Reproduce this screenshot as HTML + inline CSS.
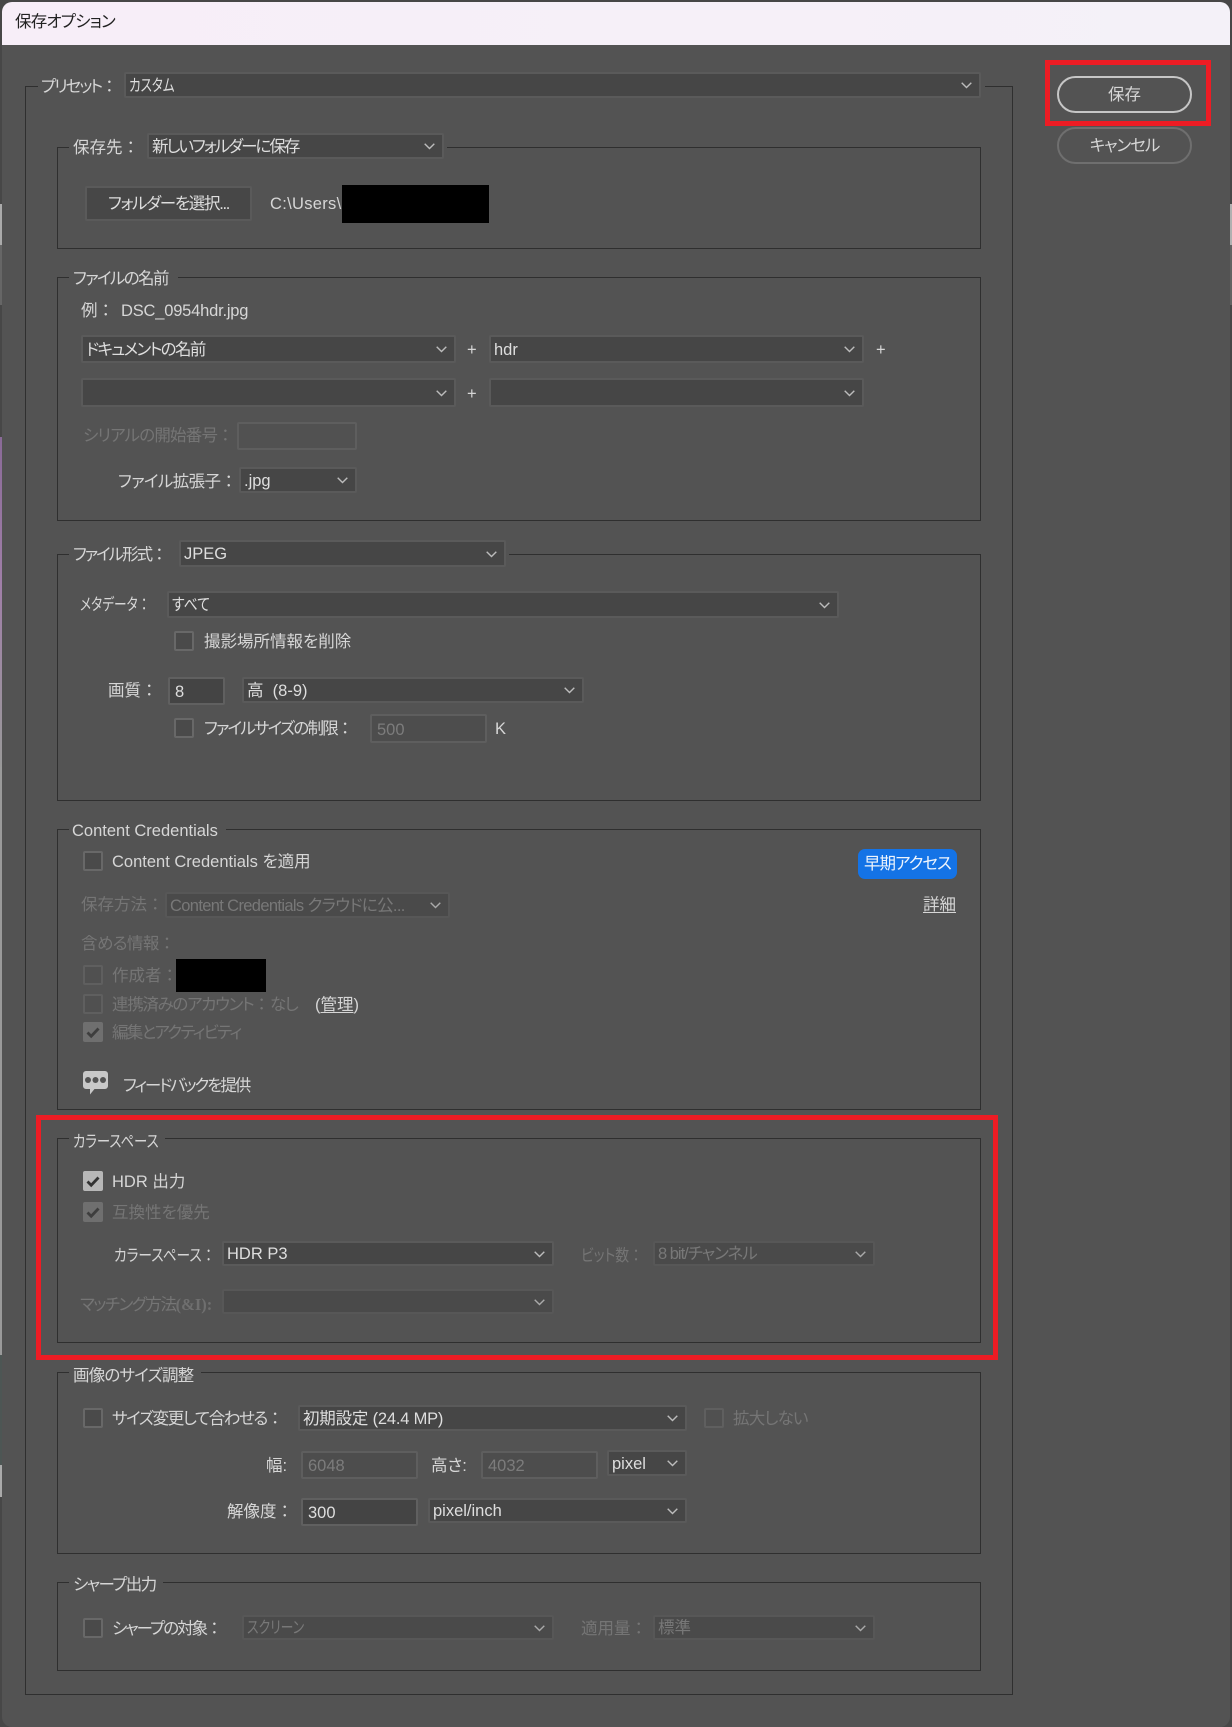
<!DOCTYPE html>
<html lang="ja"><head><meta charset="utf-8"><title>保存オプション</title>
<style>
html,body{margin:0;padding:0;background:#474747;width:1232px;height:1727px;overflow:hidden}
body{position:relative;font-family:"Liberation Sans","Noto Sans CJK JP",sans-serif;font-size:16.5px;color:#d6d6d6;font-feature-settings:"palt"}
div,span,svg{position:absolute;box-sizing:border-box}
i{font-style:normal;font-feature-settings:normal;position:static;letter-spacing:0}
#win{left:2px;top:2px;width:1228px;height:1725px;background:#535353;border-radius:10px;overflow:hidden}
#title{left:0;top:0;width:1228px;height:43px;background:linear-gradient(90deg,#f7eef8,#f6f0f8 60%,#f4f1f8);color:#222;line-height:40px;padding-left:13px;letter-spacing:-.8px}
#root{left:0;top:0;width:1232px;height:1727px}
.g{border:1px solid #2f2f2f}
.m{background:#535353;height:6px}
.t{height:25px;padding-top:1px;line-height:24px;white-space:nowrap;transform-origin:0 50%}
.d{color:#757575}
.s,.n{background:#464646;border:2px solid #5a5a5a;border-radius:2px;white-space:nowrap;overflow:hidden;padding-left:3px;padding-top:1px;color:#dedede}
.s.x{background:#4a4a4a;border-color:#575757;color:#787878}
.n{padding-left:5px;background:#444;border-color:#606060}
.n.x{background:#4d4d4d;border-color:#5e5e5e;color:#7c7c7c}
.k{position:static;display:inline-block;transform-origin:0 50%}
.c{right:7px;top:50%;margin-top:-3px;width:11px;height:7px;fill:none;stroke:#bcbcbc;stroke-width:1.4}
.x .c{stroke:#aaa}
.b{width:20px;height:20px;background:#4a4a4a;border:2px solid #686868;border-radius:2px}
.b.x{background:#505050;border-color:#5f5f5f}
.b svg{left:-2px;top:-2px;width:20px;height:20px;fill:none;stroke:#333;stroke-width:2.8}
.b.on{background:#b7b7b7;border-color:#b7b7b7}
.b.ox{background:#6f6f6f;border-color:#6f6f6f}
.b.ox svg{stroke:#3e3e3e}
.p{left:1057px;width:135px;height:37px;border:2px solid #c6c6c6;border-radius:19px;text-align:center;line-height:35px}
.r{border:5px solid #ed1c24}
u{position:static;text-underline-offset:2px}
</style></head><body>
<div style="left:0;top:204px;width:2px;height:41px;background:#aaa"></div>
<div style="left:0;top:245px;width:2px;height:60px;background:#666"></div>
<div style="left:0;top:437px;width:2px;height:330px;background:linear-gradient(#8a6a98,#a07fa8 45%,#999)"></div>
<div style="left:0;top:767px;width:2px;height:588px;background:#9a9a9a"></div>
<div style="left:0;top:1355px;width:2px;height:110px;background:#4d5654"></div>
<div style="left:0;top:1465px;width:2px;height:32px;background:#aaa"></div>
<div style="left:1230px;top:204px;width:2px;height:41px;background:#b0b0b0"></div>
<div style="left:1230px;top:245px;width:2px;height:60px;background:#626262"></div>
<div id="win"><div id="title">保存オプション</div></div>
<div id="root">

<!-- outer frame -->
<div class="g" style="left:25px;top:86px;width:988px;height:1609px"></div>
<div class="m" style="left:38px;top:83px;width:947px"></div>
<div class="t" style="left:41px;top:74px;letter-spacing:-2px">プリセット<i>：</i></div>
<div class="s" style="left:124px;top:72px;width:857px;height:26px;line-height:22px"><span class="k" style="transform:scaleX(.76)">カスタム</span><svg class="c" viewBox="0 0 11 7"><path d="M.7.7l4.800 4.800L10.300.7"/></svg></div>

<div class="p" style="top:76px">保存</div>
<div class="p" style="top:127px;border-color:#6f6f6f;letter-spacing:-1px">キャンセル</div>
<div class="r" style="left:1045px;top:60px;width:166px;height:66px"></div>

<!-- 保存先 -->
<div class="g" style="left:57px;top:147px;width:924px;height:102px"></div>
<div class="m" style="left:69px;top:144px;width:378px"></div>
<div class="t" style="left:73px;top:135px">保存先<i>：</i></div>
<div class="s" style="left:147px;top:133px;width:297px;height:26px;line-height:22px;letter-spacing:-2px">新しいフォルダーに保存<svg class="c" viewBox="0 0 11 7"><path d="M.7.7l4.800 4.800L10.300.7"/></svg></div>
<div class="s" style="left:85px;top:186px;width:167px;height:35px;line-height:31px;text-align:center;padding:0;padding-top:1px;background:#474747;letter-spacing:-1.3px">フォルダーを選択...</div>
<div class="t" style="left:270px;top:191px;letter-spacing:.3px">C:\Users\</div>
<div style="left:342px;top:185px;width:147px;height:38px;background:#000"></div>

<!-- ファイルの名前 -->
<div class="g" style="left:57px;top:277px;width:924px;height:244px"></div>
<div class="m" style="left:69px;top:274px;width:109px"></div>
<div class="t" style="left:73px;top:266px;letter-spacing:-1.6px">ファイルの名前</div>
<div class="t" style="left:81px;top:298px">例<i>：</i></div>
<div class="t" style="left:121px;top:298px;letter-spacing:-.2px">DSC_0954hdr.jpg</div>
<div class="s" style="left:81px;top:335px;width:375px;height:28px;line-height:24px;letter-spacing:-1.6px">ドキュメントの名前<svg class="c" viewBox="0 0 11 7"><path d="M.7.7l4.800 4.800L10.300.7"/></svg></div>
<div class="t" style="left:467px;top:337px">+</div>
<div class="s" style="left:489px;top:335px;width:375px;height:28px;line-height:24px">hdr<svg class="c" viewBox="0 0 11 7"><path d="M.7.7l4.800 4.800L10.300.7"/></svg></div>
<div class="t" style="left:876px;top:337px">+</div>
<div class="s" style="left:81px;top:378px;width:375px;height:29px"><svg class="c" viewBox="0 0 11 7"><path d="M.7.7l4.800 4.800L10.300.7"/></svg></div>
<div class="t" style="left:467px;top:381px">+</div>
<div class="s" style="left:489px;top:378px;width:375px;height:29px"><svg class="c" viewBox="0 0 11 7"><path d="M.7.7l4.800 4.800L10.300.7"/></svg></div>
<div class="t d" style="left:83px;top:423px;letter-spacing:-.8px">シリアルの開始番号<i>：</i></div>
<div class="n x" style="left:237px;top:422px;width:120px;height:28px;background:#515151"></div>
<div class="t" style="left:118px;top:469px;letter-spacing:-.6px">ファイル拡張子<i>：</i></div>
<div class="s" style="left:239px;top:467px;width:118px;height:26px;line-height:22px">.jpg<svg class="c" viewBox="0 0 11 7"><path d="M.7.7l4.800 4.800L10.300.7"/></svg></div>

<!-- ファイル形式 -->
<div class="g" style="left:57px;top:554px;width:924px;height:247px"></div>
<div class="m" style="left:69px;top:551px;width:440px"></div>
<div class="t" style="left:73px;top:542px;letter-spacing:-2px">ファイル形式<i>：</i></div>
<div class="s" style="left:179px;top:540px;width:327px;height:27px;line-height:23px">JPEG<svg class="c" viewBox="0 0 11 7"><path d="M.7.7l4.800 4.800L10.300.7"/></svg></div>
<div class="t" style="left:80px;top:592px;transform:scaleX(.77)">メタデータ<i>：</i></div>
<div class="s" style="left:167px;top:591px;width:672px;height:27px;line-height:23px"><span class="k" style="transform:scaleX(.84)">すべて</span><svg class="c" viewBox="0 0 11 7"><path d="M.7.7l4.800 4.800L10.300.7"/></svg></div>
<div class="b" style="left:174px;top:631px"></div>
<div class="t" style="left:204px;top:629px">撮影場所情報を削除</div>
<div class="t" style="left:108px;top:678px">画質<i>：</i></div>
<div class="n" style="left:168px;top:677px;width:57px;height:28px;line-height:25px">8</div>
<div class="s" style="left:242px;top:677px;width:342px;height:26px;line-height:22px">高&nbsp;&nbsp;(8-9)<svg class="c" viewBox="0 0 11 7"><path d="M.7.7l4.800 4.800L10.300.7"/></svg></div>
<div class="b" style="left:174px;top:718px"></div>
<div class="t" style="left:204px;top:716px;letter-spacing:-1.8px">ファイルサイズの制限<i>：</i></div>
<div class="n x" style="left:370px;top:714px;width:117px;height:29px;line-height:26px">500</div>
<div class="t" style="left:495px;top:716px">K</div>

<!-- Content Credentials -->
<div class="g" style="left:57px;top:829px;width:924px;height:281px"></div>
<div class="m" style="left:69px;top:826px;width:157px"></div>
<div class="t" style="left:72px;top:818px">Content Credentials</div>
<div class="b" style="left:83px;top:851px"></div>
<div class="t" style="left:112px;top:849px">Content Credentials を適用</div>
<div style="left:858px;top:849px;width:99px;height:30px;background:#1473e6;border-radius:7px;text-align:center;line-height:31px;color:#eef4fc;white-space:nowrap;letter-spacing:-1px">早期アクセス</div>
<div class="t" style="left:923px;top:892px"><u>詳細</u></div>
<div class="t d" style="left:81px;top:892px">保存方法<i>：</i></div>
<div class="s x" style="left:165px;top:892px;width:285px;height:26px;line-height:22px;padding-left:3px;letter-spacing:-.65px">Content Credentials クラウドに公...<svg class="c" viewBox="0 0 11 7"><path d="M.7.7l4.800 4.800L10.300.7"/></svg></div>
<div class="t d" style="left:81px;top:931px;letter-spacing:-.6px">含める情報<i>：</i></div>
<div class="b x" style="left:83px;top:965px"></div>
<div class="t d" style="left:112px;top:963px">作成者<i>：</i></div>
<div style="left:176px;top:959px;width:90px;height:33px;background:#000"></div>
<div class="b x" style="left:83px;top:994px"></div>
<div class="t d" style="left:112px;top:992px;letter-spacing:-1.300px">連携済みのアカウント<i>：</i>なし</div>
<div class="t" style="left:315px;top:992px">(<u>管理</u>)</div>
<div class="b ox" style="left:83px;top:1022px"><svg viewBox="0 0 20 20"><path d="M4.500 10.500l3.700 3.700L15.500 6.500"/></svg></div>
<div class="t d" style="left:112px;top:1020px;letter-spacing:-1.700px">編集とアクティビティ</div>
<svg style="left:83px;top:1071px" width="25" height="24" viewBox="0 0 25 24"><path fill="#c8c8c8" d="M3 0h19a3 3 0 0 1 3 3v12a3 3 0 0 1-3 3H11.500L7 23.500V18H3a3 3 0 0 1-3-3V3a3 3 0 0 1 3-3z"/><circle cx="5" cy="9" r="3" fill="#535353"/><circle cx="12.500" cy="9" r="3" fill="#535353"/><circle cx="20" cy="9" r="3" fill="#535353"/></svg>
<div class="t" style="left:123px;top:1073px;letter-spacing:-2.100px">フィードバックを提供</div>

<!-- カラースペース -->
<div class="g" style="left:57px;top:1138px;width:924px;height:205px"></div>
<div class="m" style="left:69px;top:1135px;width:96px"></div>
<div class="t" style="left:73px;top:1129px;transform:scaleX(.81)">カラースペース</div>
<div class="b on" style="left:83px;top:1171px"><svg viewBox="0 0 20 20"><path d="M4.500 10.500l3.700 3.700L15.500 6.500"/></svg></div>
<div class="t" style="left:112px;top:1169px">HDR 出力</div>
<div class="b ox" style="left:83px;top:1202px"><svg viewBox="0 0 20 20"><path d="M4.500 10.500l3.700 3.700L15.500 6.500"/></svg></div>
<div class="t d" style="left:112px;top:1200px">互換性を優先</div>
<div class="t" style="left:114px;top:1243px;transform:scaleX(.83)">カラースペース<i>：</i></div>
<div class="s" style="left:222px;top:1241px;width:332px;height:25px;line-height:21px">HDR P3<svg class="c" viewBox="0 0 11 7"><path d="M.7.7l4.800 4.800L10.300.7"/></svg></div>
<div class="t d" style="left:581px;top:1243px;transform:scaleX(.84)">ビット数<i>：</i></div>
<div class="s x" style="left:653px;top:1241px;width:222px;height:25px;line-height:21px;letter-spacing:-1px">8 bit/チャンネル<svg class="c" viewBox="0 0 11 7"><path d="M.7.7l4.800 4.800L10.300.7"/></svg></div>
<div class="t d" style="left:80px;top:1292px;letter-spacing:-1.400px">マッチング方法<i style="font-family:'Liberation Serif',serif;font-weight:bold;color:#6f6f6f">(&amp;I):</i></div>
<div class="s x" style="left:222px;top:1289px;width:332px;height:25px"><svg class="c" viewBox="0 0 11 7"><path d="M.7.7l4.800 4.800L10.300.7"/></svg></div>

<div class="r" style="left:36px;top:1115px;width:962px;height:245px"></div>

<!-- 画像のサイズ調整 -->
<div class="g" style="left:57px;top:1372px;width:924px;height:182px"></div>
<div class="m" style="left:69px;top:1369px;width:132px"></div>
<div class="t" style="left:73px;top:1363px;letter-spacing:-.8px">画像のサイズ調整</div>
<div class="b" style="left:83px;top:1408px"></div>
<div class="t" style="left:112px;top:1406px;letter-spacing:-1.400px">サイズ変更して合わせる<i>：</i></div>
<div class="s" style="left:298px;top:1405px;width:389px;height:26px;line-height:22px;letter-spacing:-.2px">初期設定 (24.4 MP)<svg class="c" viewBox="0 0 11 7"><path d="M.7.7l4.800 4.800L10.300.7"/></svg></div>
<div class="b x" style="left:704px;top:1408px"></div>
<div class="t d" style="left:733px;top:1406px;letter-spacing:-.8px">拡大しない</div>
<div class="t" style="left:266px;top:1453px">幅:</div>
<div class="n x" style="left:301px;top:1451px;width:117px;height:28px;line-height:25px">6048</div>
<div class="t" style="left:431px;top:1453px">高さ:</div>
<div class="n x" style="left:481px;top:1451px;width:117px;height:28px;line-height:25px">4032</div>
<div class="s" style="left:607px;top:1450px;width:80px;height:26px;line-height:22px">pixel<svg class="c" viewBox="0 0 11 7"><path d="M.7.7l4.800 4.800L10.300.7"/></svg></div>
<div class="t" style="left:227px;top:1499px">解像度<i>：</i></div>
<div class="n" style="left:301px;top:1498px;width:117px;height:28px;line-height:25px">300</div>
<div class="s" style="left:428px;top:1498px;width:259px;height:25px;line-height:21px">pixel/inch<svg class="c" viewBox="0 0 11 7"><path d="M.7.7l4.800 4.800L10.300.7"/></svg></div>

<!-- シャープ出力 -->
<div class="g" style="left:57px;top:1582px;width:924px;height:89px"></div>
<div class="m" style="left:69px;top:1579px;width:94px"></div>
<div class="t" style="left:73px;top:1572px;letter-spacing:-1.600px">シャープ出力</div>
<div class="b" style="left:83px;top:1618px"></div>
<div class="t" style="left:112px;top:1616px;letter-spacing:-2px">シャープの対象<i>：</i></div>
<div class="s x" style="left:242px;top:1615px;width:312px;height:25px;line-height:21px"><span class="k" style="transform:scaleX(.78)">スクリーン</span><svg class="c" viewBox="0 0 11 7"><path d="M.7.7l4.800 4.800L10.300.7"/></svg></div>
<div class="t d" style="left:581px;top:1616px">適用量<i>：</i></div>
<div class="s x" style="left:653px;top:1615px;width:222px;height:25px;line-height:21px">標準<svg class="c" viewBox="0 0 11 7"><path d="M.7.7l4.800 4.800L10.300.7"/></svg></div>
</div>
</body></html>
